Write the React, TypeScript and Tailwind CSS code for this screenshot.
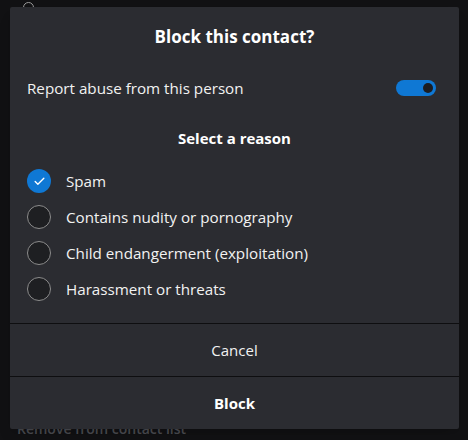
import { Check } from "lucide-react"

const reasons = [
  { label: "Spam", checked: true },
  { label: "Contains nudity or pornography", checked: false },
  { label: "Child endangerment (exploitation)", checked: false },
  { label: "Harassment or threats", checked: false },
]

function Radio({ checked }: { checked: boolean }) {
  if (checked) {
    return (
      <div className="flex h-[24px] w-[24px] items-center justify-center rounded-full bg-[#0f78d4]">
        <Check size={13} strokeWidth={2.5} className="text-white" />
      </div>
    )
  }
  return <div className="h-[24px] w-[24px] rounded-full border border-[#8c8c8c] bg-[#1e1f22]" />
}

export default function App() {
  return (
    <div
      className="relative h-[440px] w-[468px] overflow-hidden bg-[#111113]"
      style={{ fontFamily: '"Segoe UI", "Open Sans", "Noto Sans", sans-serif' }}
    >
      {/* page behind the dialog */}
      <div className="absolute left-[23px] top-[2px] h-[11px] w-[11px] rounded-full border border-[#9a9a9a]" />
      <div className="absolute left-[17px] top-[422px] text-[14px] font-semibold leading-[14px] text-[#4a4b50]">
        Remove from contact list
      </div>

      <div className="absolute left-[10px] top-[7px] flex h-[422px] w-[449px] flex-col rounded-[2px] bg-[#2b2c31] text-[#f2f2f2] shadow-lg">
        <div className="pt-[19px] text-center text-[17px] font-bold leading-[22px] text-white">
          Block this contact?
        </div>

        <div className="mt-[28px] flex h-[24px] items-center justify-between pl-[17px] pr-[23px]">
          <span className="text-[15.2px]">Report abuse from this person</span>
          <div className="flex h-[16px] w-[40px] items-center justify-end rounded-full bg-[#0f78d4] pr-[3px]">
            <div className="h-[10px] w-[10px] rounded-full bg-[#1c1d21]" />
          </div>
        </div>

        <div className="mt-[27px] text-center text-[15px] font-bold leading-[22px] text-white">
          Select a reason
        </div>

        <div className="mt-[14px] flex flex-col pl-[17px]">
          {reasons.map((r) => (
            <div key={r.label} className="flex h-[36px] items-center gap-[15px]">
              <Radio checked={r.checked} />
              <span className="text-[15.2px]">{r.label}</span>
            </div>
          ))}
        </div>

        <div className="mt-auto flex flex-col">
          <div className="h-px bg-[#0e0e10]" />
          <div className="flex h-[52px] items-center justify-center text-[15px]">Cancel</div>
          <div className="h-px bg-[#0e0e10]" />
          <div className="flex h-[52px] items-center justify-center text-[15px] font-bold text-white">Block</div>
        </div>
      </div>
    </div>
  )
}
